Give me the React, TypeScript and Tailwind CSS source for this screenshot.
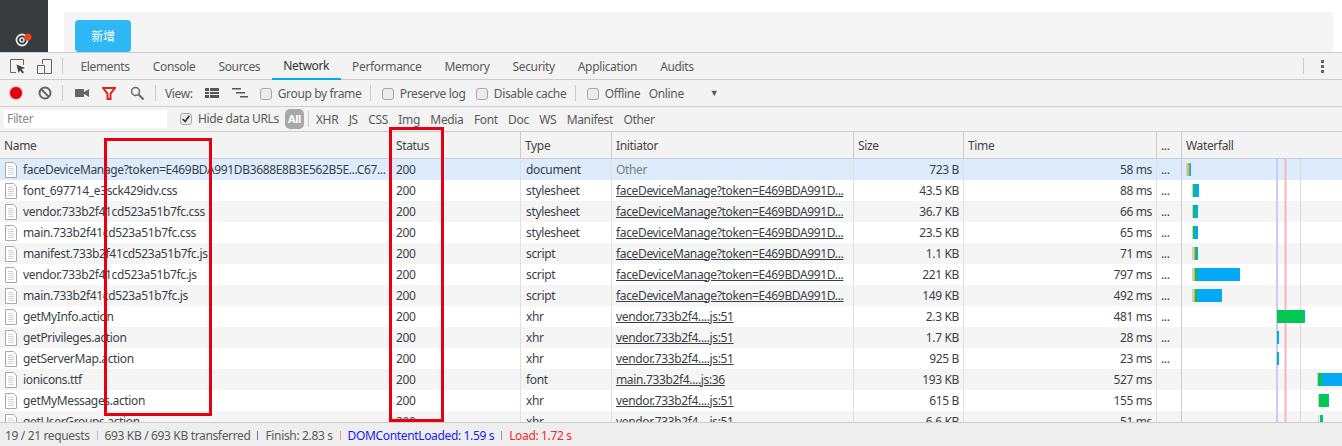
const tabs = ['Elements', 'Console', 'Sources', 'Network', 'Performance', 'Memory', 'Security', 'Application', 'Audits'];
const filters = ['XHR', 'JS', 'CSS', 'Img', 'Media', 'Font', 'Doc', 'WS', 'Manifest', 'Other'];

const faceInit = 'faceDeviceManage?token=E469BDA991D...';
const vendorInit = 'vendor.733b2f4....js:51';

const rows = [
  ['faceDeviceManage?token=E469BDA991DB3688E8B3E562B5E...C67...', 'document', 'Other', '723 B', '58 ms', true],
  ['font_697714_e3sck429idv.css', 'stylesheet', faceInit, '43.5 KB', '88 ms', true],
  ['vendor.733b2f41cd523a51b7fc.css', 'stylesheet', faceInit, '36.7 KB', '66 ms', true],
  ['main.733b2f41cd523a51b7fc.css', 'stylesheet', faceInit, '23.5 KB', '65 ms', true],
  ['manifest.733b2f41cd523a51b7fc.js', 'script', faceInit, '1.1 KB', '71 ms', true],
  ['vendor.733b2f41cd523a51b7fc.js', 'script', faceInit, '221 KB', '797 ms', true],
  ['main.733b2f41cd523a51b7fc.js', 'script', faceInit, '149 KB', '492 ms', true],
  ['getMyInfo.action', 'xhr', vendorInit, '2.3 KB', '481 ms', true],
  ['getPrivileges.action', 'xhr', vendorInit, '1.7 KB', '28 ms', true],
  ['getServerMap.action', 'xhr', vendorInit, '925 B', '23 ms', true],
  ['ionicons.ttf', 'font', 'main.733b2f4....js:36', '193 KB', '527 ms', false],
  ['getMyMessages.action', 'xhr', vendorInit, '615 B', '155 ms', false],
  ['getUserGroups.action', 'xhr', vendorInit, '6.6 KB', '51 ms', false],
] as const;

// x, colour, width per segment
const bars: [number, string, number][][] = [
  [[1186, '#d0d0d0', 2], [1187.5, '#f5a623', 1.5], [1189, '#00c853', 0.5], [1189.5, '#03a9f4', 1.5]],
  [[1192, '#d0d0d0', 1], [1193, '#00c853', 2.5], [1195, '#03a9f4', 4]],
  [[1192, '#d0d0d0', 1], [1193, '#00c853', 2.5], [1195, '#03a9f4', 3]],
  [[1192, '#d0d0d0', 1], [1193, '#00c853', 2.5], [1195, '#03a9f4', 3]],
  [[1192, '#d0d0d0', 2], [1194, '#f5a623', 1], [1195, '#00c853', 2], [1197, '#03a9f4', 1]],
  [[1192, '#d0d0d0', 2], [1194, '#f5a623', 1], [1195, '#00c853', 2], [1197, '#03a9f4', 43]],
  [[1192, '#d0d0d0', 2], [1194, '#f5a623', 1], [1195, '#00c853', 2], [1197, '#03a9f4', 25]],
  [[1276, '#d0d0d0', 1], [1277, '#00c853', 27], [1304, '#03a9f4', 1]],
  [[1276, '#d0d0d0', 1], [1277, '#03a9f4', 2]],
  [[1276, '#d0d0d0', 1], [1277, '#03a9f4', 2]],
  [[1317, '#d0d0d0', 1], [1318, '#00c853', 4], [1322, '#03a9f4', 20]],
  [[1318, '#d0d0d0', 1], [1319, '#00c853', 9], [1328, '#03a9f4', 1]],
  [[1318, '#d0d0d0', 1], [1320, '#00c853', 2], [1322, '#03a9f4', 1]],
];

function Divider() {
  return <div className="h-4 w-px shrink-0 bg-[#ccc]" />;
}

function Check({ label, checked = false }: { label: string; checked?: boolean }) {
  return (
    <label className="flex items-center gap-[6px] whitespace-nowrap text-[#5a5a5a]">
      <span className="flex h-[12px] w-[12px] items-center justify-center rounded-[3px] border border-[#a8a8a8] bg-[#ececec]">
        {checked && (
          <svg viewBox="0 0 12 12" className="h-[10px] w-[10px]">
            <path d="M2 6l3 3 5-7" fill="none" stroke="#333" strokeWidth="2" />
          </svg>
        )}
      </span>
      {label}
    </label>
  );
}

function FileIcon() {
  return (
    <svg viewBox="0 0 12 16" className="h-[16px] w-[12px] shrink-0">
      <path d="M.5.5h8l3 3v12H.5z" fill="#fff" stroke="#a8a8a8" />
      <path d="M3 4.5h5M3 6.5h6M3 8.5h6M3 10.5h6M3 12.5h6" stroke="#d4d4d4" />
    </svg>
  );
}

export default function App() {
  return (
    <div className="relative h-[446px] w-[1342px] overflow-hidden bg-white font-['Noto_Sans',sans-serif] text-[12px] tracking-[-0.35px] text-[#3a3f45]">
      {/* Page behind devtools */}
      <div className="flex h-[52px] overflow-hidden">
        <div className="flex h-full w-[48px] shrink-0 items-end justify-center bg-[#373b3e] pb-[4px]">
          <svg viewBox="0 0 20 16" className="h-[16px] w-[20px]">
            <circle cx="8" cy="8" r="5.5" fill="none" stroke="#e4e4e4" strokeWidth="1.8" />
            <circle cx="8" cy="8" r="2" fill="none" stroke="#e4e4e4" strokeWidth="1.5" />
            <circle cx="14" cy="5" r="3.5" fill="#f0440e" />
          </svg>
        </div>
        <div className="ml-[16px] mt-[12px] w-[1269px] bg-[#f4f4f4] pl-[11px] pt-[8px]">
          <div className="flex h-[32px] w-[56px] items-center justify-center rounded-[4px] bg-[#2db7f5] font-['Noto_Sans_CJK_SC',sans-serif] text-[12px] text-white">
            新增
          </div>
        </div>
      </div>

      {/* Tabs */}
      <div className="flex h-[28px] items-center border-y border-[#ccc] bg-[#f3f3f3]">
        <div className="flex w-[62px] items-center gap-[11px] pl-[10px]">
          <svg viewBox="0 0 16 15" className="h-[15px] w-[16px]">
            <path d="M6 13.5H.5V.5h13V6" fill="none" stroke="#666" />
            <path d="M6.5 5.5l8.500 3.500-3.500 1.200 2.500 3-1.500 1.300-2.500-3-1.500 2.500z" fill="#444" />
          </svg>
          <svg viewBox="0 0 15 15" className="h-[15px] w-[15px]">
            <path d="M5.5 5V.5h9v14H8M.5 6.500h7v8h-7z" fill="none" stroke="#666" />
          </svg>
        </div>
        <Divider />
        <div className="ml-[6px] flex h-full">
          {tabs.map((t) => (
            <div key={t} className={`flex h-[27px] items-center whitespace-nowrap px-[11.5px] pt-[1px] ${t === 'Network' ? 'border-b-2 border-[#03a9f4] text-[#333]' : 'text-[#5a5a5a]'}`}>
              {t}
            </div>
          ))}
        </div>
        <div className="ml-auto mr-[18px] flex items-center gap-[17px]">
          <Divider />
          <div className="flex flex-col gap-[2px]">
            <span className="h-[3px] w-[3px] bg-[#666]" />
            <span className="h-[3px] w-[3px] bg-[#666]" />
            <span className="h-[3px] w-[3px] bg-[#666]" />
          </div>
        </div>
      </div>

      {/* Network toolbar */}
      <div className="flex h-[27px] items-center border-b border-[#ccc] bg-[#f3f3f3] pl-[10px] text-[#5a5a5a]">
        <span className="h-[12px] w-[12px] shrink-0 rounded-full bg-[#e0000f] ring-1 ring-[#f3b0b0]" />
        <svg viewBox="0 0 14 14" className="ml-[16px] h-[14px] w-[14px] shrink-0">
          <circle cx="7" cy="7" r="5.5" fill="none" stroke="#666" strokeWidth="2" />
          <path d="M3 3l8 8" stroke="#666" strokeWidth="2" />
        </svg>
        <div className="ml-[10px]"><Divider /></div>
        <svg viewBox="0 0 14 10" className="ml-[12px] h-[10px] w-[14px] shrink-0">
          <path d="M0 1h9v8H0zM9 4l5-3v8L9 6z" fill="#666" />
        </svg>
        <svg viewBox="0 0 14 13" className="ml-[13px] h-[13px] w-[14px] shrink-0">
          <path d="M1 1h12L8.5 6.5V12h-3V6.5z" fill="#fff" stroke="#e2231a" strokeWidth="2" />
        </svg>
        <svg viewBox="0 0 14 14" className="ml-[14px] h-[14px] w-[14px] shrink-0">
          <circle cx="5.5" cy="5.5" r="4" fill="none" stroke="#666" strokeWidth="1.5" />
          <path d="M8.5 8.5l5 5" stroke="#666" strokeWidth="2" />
        </svg>
        <div className="ml-[11px]"><Divider /></div>
        <span className="ml-[9px] pt-[1px]">View:</span>
        <svg viewBox="0 0 14 10" className="ml-[12px] h-[10px] w-[14px] shrink-0">
          <path d="M0 0h4v3H0zM5 0h9v3H5zM0 4h4v2H0zM5 4h9v2H5zM0 7h4v3H0zM5 7h9v3H5z" fill="#555" />
        </svg>
        <svg viewBox="0 0 16 10" className="ml-[13px] h-[10px] w-[16px] shrink-0">
          <path d="M0 0h9v1.500H0zM4 4h9v1.500H4zM8 8h8v1.500H8z" fill="#555" />
        </svg>
        <div className="ml-[12px] flex w-[110px] pt-[1px]"><Check label="Group by frame" /></div>
        <Divider />
        <div className="ml-[11px] flex w-[94px] pt-[1px]"><Check label="Preserve log" /></div>
        <div className="flex w-[99px] pt-[1px]"><Check label="Disable cache" /></div>
        <Divider />
        <div className="ml-[11px] flex w-[62px] pt-[1px]"><Check label="Offline" /></div>
        <span className="w-[61px] pt-[1px]">Online</span>
        <span className="text-[9px]">▼</span>
      </div>

      {/* Filter bar */}
      <div className="flex h-[25px] items-center border-b border-[#ccc] bg-[#f3f3f3] text-[#5a5a5a]">
        <div className="ml-[4px] flex h-[18px] w-[163px] items-center bg-white pl-[3px] text-[#8a8a8a]">Filter</div>
        <div className="ml-[13px]"><Check label="Hide data URLs" checked /></div>
        <span className="ml-[6px] flex h-[20px] w-[19px] items-center justify-center rounded-[5px] bg-[#a8a8a8] text-[11px] font-bold text-white">All</span>
        <div className="mx-[4px]"><Divider /></div>
        <div className="ml-[3px] flex gap-[10.4px] pt-[1px]">
          {filters.map((f) => (
            <span key={f}>{f}</span>
          ))}
        </div>
      </div>

      {/* Table */}
      <div className="grid h-[27px] grid-cols-[392px_129px_91px_242px_110px_193px_25px_160px] border-b border-[#ccc] bg-[#f3f3f3] text-[#444]">
        {['Name', 'Status', 'Type', 'Initiator', 'Size', 'Time', '...', 'Waterfall'].map((h) => (
          <div key={h} className="flex items-center border-r border-[#ccc] px-[4px] pt-[1px] last:border-r-0">
            {h}
          </div>
        ))}
      </div>
      <div className="h-[263px] overflow-hidden">
        {rows.map((r, i) => (
          <div
            key={r[0]}
            className={`grid h-[21px] grid-cols-[392px_129px_91px_242px_110px_193px_25px_160px] items-center whitespace-nowrap ${i === 0 ? 'bg-[#dcecfc]' : i % 2 === 0 ? 'bg-[#f5f5f5]' : 'bg-white'}`}
          >
            <div className="flex h-full items-center gap-[6px] overflow-hidden border-r border-[#e0e0e0] pl-[5px]">
              <FileIcon />
              <span>{r[0]}</span>
            </div>
            <div className="flex h-full items-center border-r border-[#e0e0e0] pl-[4px]">200</div>
            <div className="flex h-full items-center border-r border-[#e0e0e0] pl-[5px]">{r[1]}</div>
            <div className={`flex h-full items-center border-r border-[#e0e0e0] pl-[4px] ${r[2] === 'Other' ? 'text-[#808080]' : 'underline'}`}>{r[2]}</div>
            <div className="flex h-full items-center justify-end border-r border-[#e0e0e0] pr-[4px]">{r[3]}</div>
            <div className="flex h-full items-center justify-end border-r border-[#e0e0e0] pr-[4px]">{r[4]}</div>
            <div className="flex h-full items-center border-r border-[#ccc] pl-[4px]">{r[5] ? '...' : ''}</div>
            <div />
          </div>
        ))}
      </div>

      {/* Status bar */}
      <div className="flex h-[25px] items-center border-t border-[#ccc] bg-[#eee] pl-[5px] pt-[1px] text-[#5a5a5a]">
        <span>19 / 21 requests</span>
        <span className="mx-[7px] h-[9px] w-px bg-[#8ec8ee]" />
        <span>693 KB / 693 KB transferred</span>
        <span className="mx-[7px] h-[9px] w-px bg-[#6a7ac0]" />
        <span>Finish: 2.83 s</span>
        <span className="mx-[7px] h-[9px] w-px bg-[#e8a080]" />
        <span className="text-[#1a1aee]">DOMContentLoaded: 1.59 s</span>
        <span className="mx-[7px] h-[9px] w-px bg-[#999]" />
        <span className="text-[#f02828]">Load: 1.72 s</span>
      </div>

      {/* Waterfall chart drawn over the table */}
      <svg className="pointer-events-none absolute left-[1182px] top-[159px]" width="160" height="263" viewBox="1182 159 160 263">
        <rect x="1276" y="159" width="2" height="263" fill="#c8ccf8" />
        <rect x="1284.5" y="159" width="2" height="263" fill="#f8b4b8" />
        <rect x="1300" y="159" width="1" height="263" fill="#d8d8d8" />
        {bars.map((row, i) =>
          row.map(([x, c, w], j) => <rect key={j} x={x} y={163 + i * 21} width={w} height={13} fill={c} />),
        )}
      </svg>

      {/* Red annotation boxes */}
      <div className="absolute left-[104px] top-[138px] h-[278px] w-[108px] border-[3px] border-[#e60012]" />
      <div className="absolute left-[389px] top-[127px] h-[295px] w-[55px] border-[3px] border-[#e60012]" />
    </div>
  );
}
